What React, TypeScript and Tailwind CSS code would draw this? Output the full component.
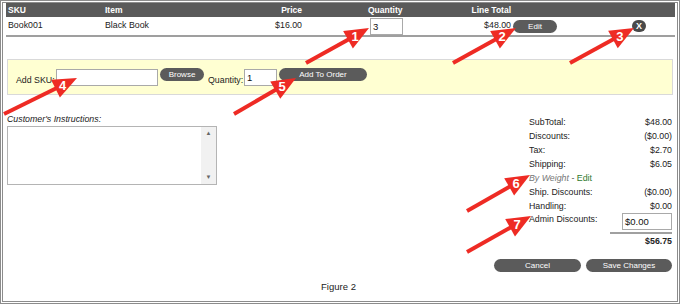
import React from "react";

const font = "font-['Liberation_Sans',Arial,sans-serif]";

type ArrowProps = { x1: number; y1: number; x2: number; y2: number; n: number };

const Arrow = ({ x1, y1, x2, y2, n }: ArrowProps) => {
  const len = Math.hypot(x2 - x1, y2 - y1);
  const dx = (x2 - x1) / len;
  const dy = (y2 - y1) / len;
  const head = 24;
  const half = 10;
  const bx = x2 - dx * head;
  const by = y2 - dy * head;
  const px = -dy * half;
  const py = dx * half;
  const cx = x2 - dx * 16;
  const cy = y2 - dy * 16;
  return (
    <g>
      <line x1={x1} y1={y1} x2={bx + dx * 2} y2={by + dy * 2} stroke="#ee2b24" strokeWidth={4} />
      <polygon
        points={`${x2},${y2} ${bx + px},${by + py} ${bx - px},${by - py}`}
        fill="#ee2b24"
      />
      <text
        x={cx}
        y={cy + 5}
        textAnchor="middle"
        fill="#fff"
        fontSize={13}
        fontWeight="bold"
        fontFamily="Liberation Sans, Arial, sans-serif"
      >
        {n}
      </text>
    </g>
  );
};

const Pill = ({ label, className = "" }: { label: string; className?: string }) => (
  <div
    className={`shrink-0 h-[13px] rounded-full bg-[#5b5b5b] text-white text-[8px] leading-[13px] whitespace-nowrap flex items-center justify-center ${className}`}
  >
    {label}
  </div>
);

const Box = ({ value, className = "" }: { value: string; className?: string }) => (
  <div
    className={`shrink-0 h-[17px] border border-[#a9a9a9] bg-white pl-[2px] text-[9.5px] leading-[15px] text-[#111] ${className}`}
  >
    {value}
  </div>
);

const Total = ({ label, value }: { label: string; value: string }) => (
  <div className="flex justify-between h-[14px] leading-[14px]">
    <span>{label}</span>
    <span>{value}</span>
  </div>
);

export default function App() {
  return (
    <div
      className={`relative w-[680px] h-[304px] bg-white border-[3px] border-double border-[#8c8c8c] text-[8.8px] text-[#222] ${font}`}
    >
      {/* item grid */}
      <div className="ml-[3px] mr-[2px]">
        <div className="flex h-[14px] items-center bg-[#5a5a5a] text-white font-bold text-[8.5px]">
          <div className="w-[99px] pl-[2px]">SKU</div>
          <div className="w-[150px]">Item</div>
          <div className="w-[47px] text-right">Price</div>
          <div className="w-[66px]"></div>
          <div className="w-[60px]">Quantity</div>
          <div className="w-[83px] text-right">Line Total</div>
        </div>
        <div className="flex h-[20px] items-center border-b-2 border-[#9f9f9f]">
          <div className="w-[99px] pl-[2px]">Book001</div>
          <div className="w-[150px]">Black Book</div>
          <div className="w-[47px] text-right">$16.00</div>
          <div className="w-[68px]"></div>
          <Box value="3" className="w-[33px] h-[16px]" />
          <div className="w-[108px] text-right">$48.00</div>
          <Pill label="Edit" className="ml-[2px] w-[44px] h-[12px]" />
          <div className="shrink-0 ml-[75px] w-[14px] h-[12px] rounded-full bg-[#4a4a4a] text-white font-bold text-[9px] leading-[12px] flex items-center justify-center">
            X
          </div>
        </div>
      </div>

      {/* add sku bar */}
      <div className="ml-[4px] mr-[4px] mt-[22px] h-[36px] border border-[#d9d9d9] bg-[#ffffd2] flex items-start pt-[8px] pl-[8px]">
        <span className="mt-[6px] w-[40px] shrink-0">Add SKU:</span>
        <Box value="" className="w-[102px] mt-[1px]" />
        <Pill label="Browse" className="ml-[2px] w-[44px]" />
        <span className="ml-[4px] mt-[6px] w-[35px] shrink-0">Quantity:</span>
        <Box value="1" className="ml-[1px] w-[33px] mt-[1px]" />
        <Pill label="Add To Order" className="ml-[2px] w-[88px]" />
      </div>

      {/* instructions and totals */}
      <div className="flex justify-between ml-[4px] mr-[5px] mt-[18px]">
        <div className="w-[210px]">
          <div className="italic h-[12px] leading-[12px]">Customer&apos;s Instructions:</div>
          <div className="mt-[1px] h-[59px] border border-[#b4b4b4] bg-white flex justify-end">
            <div className="w-[15px] bg-[#f1f1f1] flex flex-col justify-between items-center py-[2px] text-[6px] text-[#666]">
              <span>▲</span>
              <span>▼</span>
            </div>
          </div>
        </div>
        <div className="w-[143px] mt-[2px]">
          <Total label="SubTotal:" value="$48.00" />
          <Total label="Discounts:" value="($0.00)" />
          <Total label="Tax:" value="$2.70" />
          <Total label="Shipping:" value="$6.05" />
          <div className="h-[14px] leading-[14px]">
            <span className="italic text-[#777]">By Weight</span>
            <span className="text-[#555]"> - </span>
            <span className="text-[#2f7a2f]">Edit</span>
          </div>
          <Total label="Ship. Discounts:" value="($0.00)" />
          <Total label="Handling:" value="$0.00" />
          <div className="flex justify-between items-start h-[18px]">
            <span className="leading-[12px]">Admin Discounts:</span>
            <Box value="$0.00" className="w-[50px]" />
          </div>
          <div className="ml-[81px] mt-[1px] border-t-2 border-[#a0a0a0]"></div>
          <div className="text-right font-bold mt-[1px] h-[13px] leading-[13px]">$56.75</div>
          <div className="flex justify-end gap-[5px] mt-[11px]">
            <Pill label="Cancel" className="w-[87px] h-[12px]" />
            <Pill label="Save Changes" className="w-[86px] h-[12px]" />
          </div>
        </div>
      </div>

      <div className="text-center text-[9.5px] mt-[8px] pr-[3px]">Figure 2</div>

      {/* callout arrows */}
      <svg className="absolute -left-[3px] -top-[3px] w-[680px] h-[304px] pointer-events-none" viewBox="0 0 680 304">
        <Arrow x1={306} y1={63} x2={369} y2={28} n={1} />
        <Arrow x1={453} y1={63} x2={516} y2={28} n={2} />
        <Arrow x1={570} y1={63} x2={634} y2={28} n={3} />
        <Arrow x1={4} y1={114} x2={77} y2={78} n={4} />
        <Arrow x1={234} y1={114} x2={296} y2={78} n={5} />
        <Arrow x1={467} y1={211} x2={530} y2={175} n={6} />
        <Arrow x1={467} y1={252} x2={531} y2={216} n={7} />
      </svg>
    </div>
  );
}
